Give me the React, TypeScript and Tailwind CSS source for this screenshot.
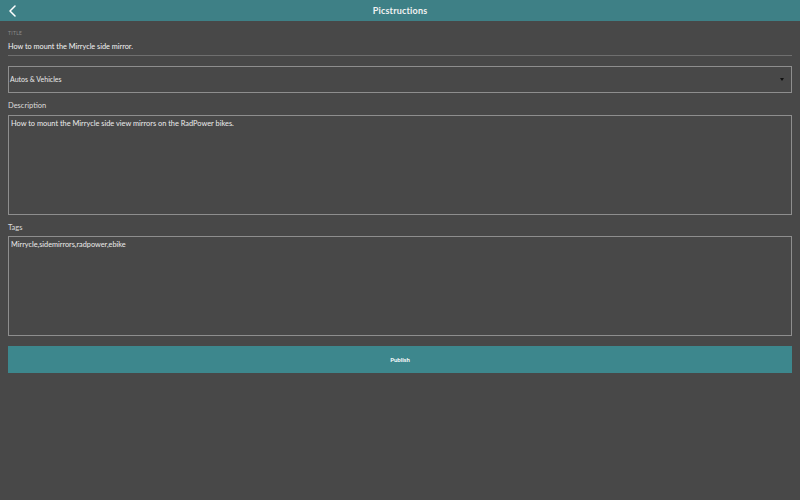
import React from 'react';

const font = { fontFamily: '"Lato", "Noto Sans", sans-serif' };

const App = () => {
  return (
    <div className="w-[800px] h-[500px] bg-[#484848] text-white overflow-hidden" style={font}>
      <div className="relative h-[21px] bg-[#3e8086] flex items-center justify-center">
        <button className="absolute left-[7px] top-[4px] h-[13px] w-[10px] flex items-center justify-center">
          <svg width="7" height="12" viewBox="0 0 7 12" fill="none">
            <path d="M6 1 1 6l5 5" stroke="white" strokeWidth="1.5" strokeLinecap="round" strokeLinejoin="round" />
          </svg>
        </button>
        <h1 className="text-[9px] font-bold tracking-[0.2px] text-[#f2f2f2]">Picstructions</h1>
      </div>

      <div className="px-[8px]">
        <div className="pt-[9px] border-b border-[#6f6f6f] pb-[3px]">
          <div className="text-[5px] uppercase tracking-[0.3px] text-[#8c8c8c] leading-[6px]">Title</div>
          <div className="text-[7.3px] text-[#f4f4f4] mt-[6px] leading-[10px]">How to mount the Mirrycle side mirror.</div>
        </div>

        <div className="mt-[10px] h-[27px] border border-[#8e8e8e] flex items-center justify-between pr-[7px]">
          <span className="text-[7px] text-[#e8e8e8] pl-[1px]">Autos &amp; Vehicles</span>
          <svg width="4" height="3" viewBox="0 0 4 3">
            <path d="M0 0h4L2 3z" fill="#111" />
          </svg>
        </div>

        <div className="mt-[8px] text-[7.5px] text-[#dcdcdc] leading-[10px]">Description</div>
        <div className="mt-[4px] h-[100px] border border-[#8e8e8e] px-[2px] pt-[3px]">
          <p className="text-[7.4px] text-[#ececec] leading-[9px]">How to mount the Mirrycle side view mirrors on the RadPower bikes.</p>
        </div>

        <div className="mt-[8px] text-[7.5px] text-[#dcdcdc] leading-[10px]">Tags</div>
        <div className="mt-[3px] h-[100px] border border-[#8e8e8e] px-[2px] pt-[3px]">
          <p className="text-[7.3px] text-[#ececec] leading-[9px]">Mirrycle,sidemirrors,radpower,ebike</p>
        </div>

        <button className="mt-[10px] w-full h-[27px] bg-[#3d878d] flex items-center justify-center">
          <span className="text-[6px] font-bold text-white">Publish</span>
        </button>
      </div>
    </div>
  );
};

export default App;
